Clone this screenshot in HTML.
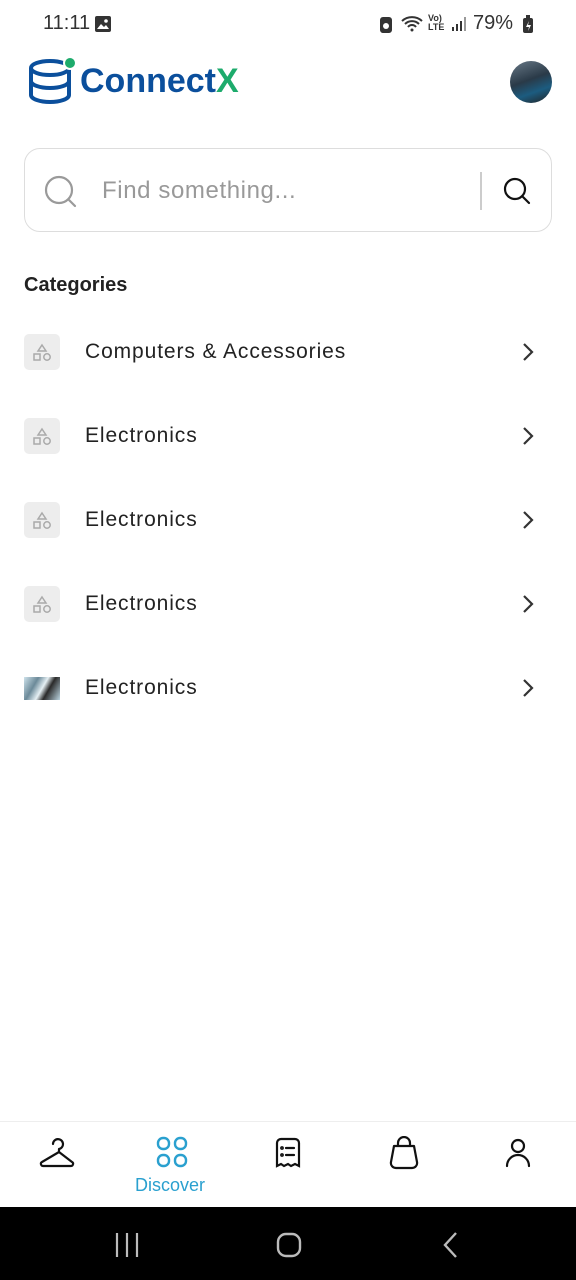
<!DOCTYPE html>
<html><head><meta charset="utf-8"><style>
*{margin:0;padding:0;box-sizing:border-box}
body{width:576px;height:1280px;position:relative;background:#fff;font-family:"Liberation Sans",sans-serif;overflow:hidden;color:#222}
.a{position:absolute}
.row{position:absolute;left:0;width:576px;height:36px}
.ib{position:absolute;left:24px;top:0;width:36px;height:36px;border-radius:5px;background:#ededed}
.rt{position:absolute;left:85px;top:6px;font-size:21px;color:#222;letter-spacing:0.9px}
.ch{position:absolute;left:518px;top:8px}
</style></head><body>
<div class="a" style="left:43px;top:12px;font-size:20px;color:#333">11:11</div>
<svg class="a" style="left:94px;top:15px" width="18" height="18"><rect x="1" y="1" width="16" height="16" rx="2" fill="#333"/><path d="M3 14l4-5 3 3 2-2 3 4z" fill="#fff"/><circle cx="12" cy="6" r="1.8" fill="#fff"/></svg>
<svg class="a" style="left:379px;top:16px" width="14" height="18"><rect x="1" y="1" width="12" height="16" rx="3" fill="#333"/><circle cx="7" cy="10" r="3" fill="#fff"/></svg>
<svg class="a" style="left:400px;top:14px" width="26" height="20"><path d="M2 7a15 15 0 0 1 20 0M5 10a10 10 0 0 1 14 0M8 13a5 5 0 0 1 8 0" stroke="#333" stroke-width="2" fill="none"/><circle cx="12" cy="16" r="1.5" fill="#333"/></svg>
<div class="a" style="left:428px;top:14px;font-size:9px;line-height:9px;color:#333;font-weight:bold">Vo)<br>LTE</div>
<svg class="a" style="left:450px;top:16px" width="18" height="16"><rect x="2" y="11" width="2" height="4" fill="#333"/><rect x="6" y="8" width="2" height="7" fill="#333"/><rect x="10" y="5" width="2" height="10" fill="#333"/><rect x="14" y="1" width="2" height="14" fill="#999"/></svg>
<div class="a" style="left:473px;top:12px;font-size:20px;color:#333">79%</div>
<svg class="a" style="left:522px;top:15px" width="12" height="19"><rect x="1" y="3" width="10" height="15" rx="2" fill="#333"/><rect x="4" y="0" width="4" height="3" fill="#333"/><path d="M7 6l-3 6h3l-1 4 3-6h-3z" fill="#fff"/></svg>
<svg class="a" style="left:28px;top:56px" width="50" height="50">
<ellipse cx="22" cy="12" rx="19" ry="7" fill="none" stroke="#0b4f9c" stroke-width="4"/>
<path d="M3 12v27c0 4 9 7 19 7s19-3 19-7V12M3 25c0 4 9 7 19 7s19-3 19-7" fill="none" stroke="#0b4f9c" stroke-width="4"/>
<circle cx="42" cy="7" r="6" fill="#1dab6c" stroke="#fff" stroke-width="2"/></svg>
<div class="a" style="left:80px;top:62px;font-size:34px;font-weight:bold;color:#0b4f9c;letter-spacing:0px">Connect<span style="color:#1dab6c">X</span></div>
<div class="a" style="left:510px;top:61px;width:42px;height:42px;border-radius:50%;background:linear-gradient(160deg,#6a7a88,#2a3a48 45%,#1c5c80 70%,#222);"></div>
<div class="a" style="left:24px;top:148px;width:528px;height:84px;border:1.5px solid #ddd;border-radius:16px"></div>
<svg class="a" style="left:43px;top:174px" width="36" height="36"><circle cx="16" cy="16" r="13" fill="none" stroke="#9a9a9a" stroke-width="2.2"/><path d="M26 26l6 6" stroke="#9a9a9a" stroke-width="2.2" stroke-linecap="round"/></svg>
<div class="a" style="left:102px;top:177px;font-size:24px;color:#999;letter-spacing:0.6px">Find something...</div>
<div class="a" style="left:480px;top:172px;width:1.5px;height:38px;background:#ccc"></div>
<svg class="a" style="left:502px;top:176px" width="30" height="30"><circle cx="13" cy="13" r="10" fill="none" stroke="#111" stroke-width="2.2"/><path d="M21 21l6 6" stroke="#111" stroke-width="2.2" stroke-linecap="round"/></svg>
<div class="a" style="left:24px;top:274px;font-size:20px;font-weight:bold;color:#222">Categories</div>
<div class="row" style="top:334px"><div class="ib"><svg width="36" height="36"><path d="M18 11l4 6h-8z" fill="none" stroke="#aaa" stroke-width="1.5"/><rect x="10" y="20" width="6" height="6" fill="none" stroke="#aaa" stroke-width="1.5"/><circle cx="23" cy="23" r="3.2" fill="none" stroke="#aaa" stroke-width="1.5"/></svg></div><div class="rt">Computers &amp; Accessories</div><svg class="ch" width="20" height="20"><path d="M6 2l8 8-8 8" fill="none" stroke="#333" stroke-width="2.2"/></svg></div>
<div class="row" style="top:418px"><div class="ib"><svg width="36" height="36"><path d="M18 11l4 6h-8z" fill="none" stroke="#aaa" stroke-width="1.5"/><rect x="10" y="20" width="6" height="6" fill="none" stroke="#aaa" stroke-width="1.5"/><circle cx="23" cy="23" r="3.2" fill="none" stroke="#aaa" stroke-width="1.5"/></svg></div><div class="rt">Electronics</div><svg class="ch" width="20" height="20"><path d="M6 2l8 8-8 8" fill="none" stroke="#333" stroke-width="2.2"/></svg></div>
<div class="row" style="top:502px"><div class="ib"><svg width="36" height="36"><path d="M18 11l4 6h-8z" fill="none" stroke="#aaa" stroke-width="1.5"/><rect x="10" y="20" width="6" height="6" fill="none" stroke="#aaa" stroke-width="1.5"/><circle cx="23" cy="23" r="3.2" fill="none" stroke="#aaa" stroke-width="1.5"/></svg></div><div class="rt">Electronics</div><svg class="ch" width="20" height="20"><path d="M6 2l8 8-8 8" fill="none" stroke="#333" stroke-width="2.2"/></svg></div>
<div class="row" style="top:586px"><div class="ib"><svg width="36" height="36"><path d="M18 11l4 6h-8z" fill="none" stroke="#aaa" stroke-width="1.5"/><rect x="10" y="20" width="6" height="6" fill="none" stroke="#aaa" stroke-width="1.5"/><circle cx="23" cy="23" r="3.2" fill="none" stroke="#aaa" stroke-width="1.5"/></svg></div><div class="rt">Electronics</div><svg class="ch" width="20" height="20"><path d="M6 2l8 8-8 8" fill="none" stroke="#333" stroke-width="2.2"/></svg></div>
<div class="row" style="top:670px"><div class="a" style="left:24px;top:7px;width:36px;height:23px;background:linear-gradient(120deg,#cfe3ec,#6c8a99 30%,#e6f0f4 50%,#2a2a2a 65%,#bcd6e2)"></div><div class="rt">Electronics</div><svg class="ch" width="20" height="20"><path d="M6 2l8 8-8 8" fill="none" stroke="#333" stroke-width="2.2"/></svg></div>
<div class="a" style="left:0;top:1121px;width:576px;height:1px;background:#eee"></div>
<svg class="a" style="left:38px;top:1136px" width="40" height="34" fill="none" stroke="#111" stroke-width="2.2" stroke-linecap="round" stroke-linejoin="round"><path d="M15 8a5 5 0 1 1 6 5v3L4 26c-2 1-1 4 1 4h28c2 0 3-3 1-4L21 16"/></svg>
<svg class="a" style="left:155px;top:1136px" width="36" height="34" fill="none" stroke="#2aa0cf" stroke-width="2.4"><rect x="3" y="2" width="11" height="11" rx="5"/><rect x="20" y="2" width="11" height="11" rx="5"/><rect x="3" y="19" width="11" height="11" rx="5"/><rect x="20" y="19" width="11" height="11" rx="5"/></svg>
<div class="a" style="left:135px;top:1175px;font-size:18px;color:#2aa0cf">Discover</div>
<svg class="a" style="left:273px;top:1136px" width="30" height="34" fill="none" stroke="#111" stroke-width="2.2" stroke-linecap="round"><path d="M4 30V7a4 4 0 0 1 4-4h14a4 4 0 0 1 4 4v23l-4-2-4 2-3-2-4 2-3-2z"/><path d="M13 12h8M13 19h8"/><circle cx="9" cy="12" r=".8"/><circle cx="9" cy="19" r=".8"/></svg>
<svg class="a" style="left:386px;top:1136px" width="36" height="36" fill="none" stroke="#111" stroke-width="2.2" stroke-linejoin="round"><path d="M12 10V7a6 6 0 0 1 12 0v3M8 10h20l3 16a5 5 0 0 1-5 6H10a5 5 0 0 1-5-6z"/></svg>
<svg class="a" style="left:503px;top:1136px" width="30" height="34" fill="none" stroke="#111" stroke-width="2.2" stroke-linecap="round"><circle cx="15" cy="10" r="6"/><path d="M4 30a11 11 0 0 1 22 0"/></svg>
<div class="a" style="left:0;top:1207px;width:576px;height:73px;background:#000"></div>
<svg class="a" style="left:110px;top:1230px" width="36" height="30" stroke="#bbb" stroke-width="2.2"><path d="M7 3v24M17 3v24M27 3v24"/></svg>
<svg class="a" style="left:274px;top:1230px" width="30" height="30" fill="none" stroke="#bbb" stroke-width="2.4"><rect x="4" y="4" width="22" height="22" rx="8"/></svg>
<svg class="a" style="left:438px;top:1230px" width="24" height="30" fill="none" stroke="#bbb" stroke-width="2.4"><path d="M18 3L7 15l11 12"/></svg>
</body></html>
